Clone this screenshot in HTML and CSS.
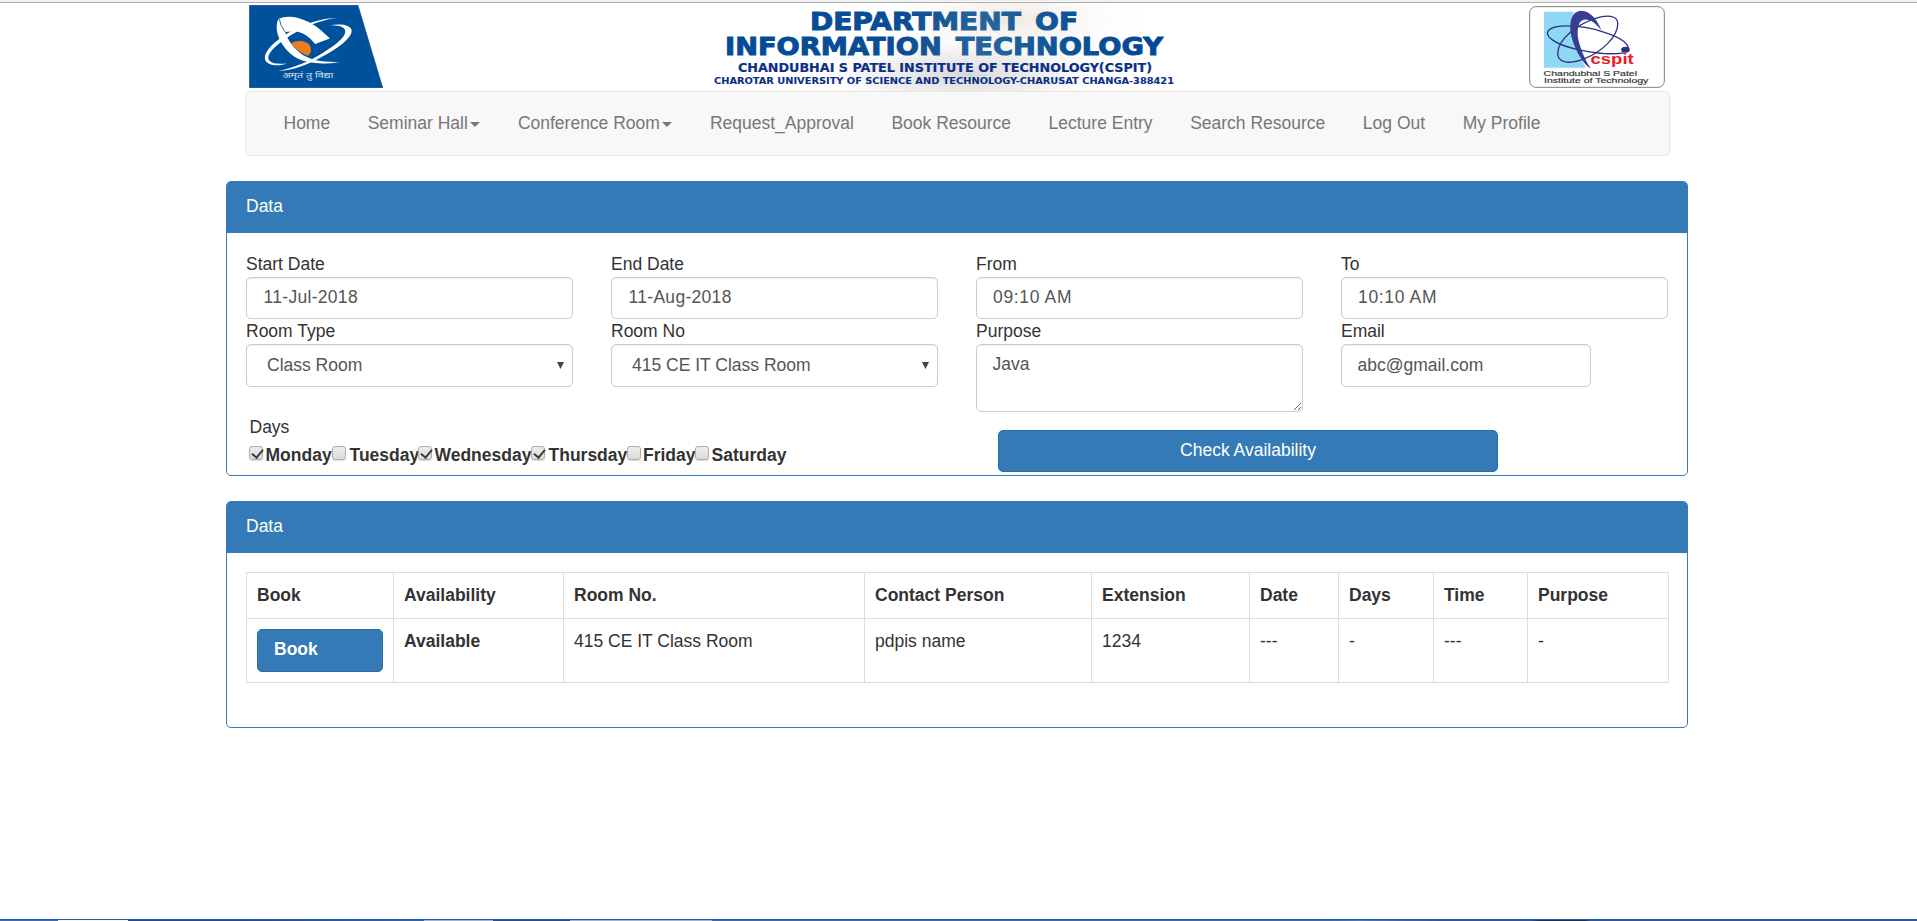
FILE: index.html
```
<!DOCTYPE html>
<html lang="en">
<head>
<meta charset="utf-8">
<title>Book Resource</title>
<link rel="stylesheet" href="styles.css">
</head>
<body>
<div class="topline"></div>
<header class="banner">
  <svg class="logo" viewBox="89 16 401 247" preserveAspectRatio="none">
    <path d="M90 17H415L489 262H90Z" fill="#00519c" stroke="#1b3f93" stroke-width="2"/>
    <path d="M215 130C233 119 262 122 271 137C278 149 274 161 265 167Q234 156 215 130Z" fill="#ec7d1c"/>
    <path d="M178 57C200 46 235 50 266 66C293 79 314 99 331 116L287 132C270 110 250 97 228 94L197 96C208 130 234 156 262 171C290 184 320 186 359 186C310 193 264 191 232 174C195 153 169 110 172 77Q173 64 178 57Z" fill="#fff"/>
    <path d="M180 58Q181 75 197 96" fill="none" stroke="#00519c" stroke-width="2.500"/>
    <path d="M354 54C300 61 245 83 195 119C155 147 138 170 151 183C160 192 181 192 203 190C178 199 149 196 140 184C126 163 158 131 191 109C240 76 300 56 354 54Z" fill="#fff"/>
    <path d="M329 76C366 70 393 76 396 90C400 114 350 150 298 175C255 197 219 210 177 212C220 204 263 186 301 164C347 137 383 110 376 90C371 78 353 76 329 76Z" fill="#fff"/>
    <text class="motto" x="189" y="234" textLength="152" lengthAdjust="spacingAndGlyphs">अमृतं तु विद्या</text>
  </svg>
  <svg class="title" viewBox="0 0 480 88">
    <defs>
      <linearGradient id="ink" gradientUnits="userSpaceOnUse" x1="20" x2="460" y1="0" y2="0">
        <stop offset="0" stop-color="#004b9b"/><stop offset=".42" stop-color="#0b4d93"/><stop offset=".6" stop-color="#24669c"/><stop offset=".8" stop-color="#0c5197"/><stop offset="1" stop-color="#004795"/>
      </linearGradient>
      <radialGradient id="haze"><stop offset="0" stop-color="#d8d8d8"/><stop offset=".5" stop-color="#e8e8e8" stop-opacity=".7"/><stop offset="1" stop-color="#fff" stop-opacity="0"/></radialGradient>
      <radialGradient id="warm"><stop offset="0" stop-color="#eee8e0"/><stop offset="1" stop-color="#fff" stop-opacity="0"/></radialGradient>
    </defs>
    <ellipse cx="310" cy="16" rx="150" ry="50" fill="url(#warm)"/>
    <ellipse cx="265" cy="72" rx="160" ry="42" fill="url(#haze)"/>
    <g class="caps" fill="url(#ink)" stroke="url(#ink)">
      <text x="110" y="26.500" font-size="24" stroke-width="1" word-spacing="4" textLength="268" lengthAdjust="spacingAndGlyphs">DEPARTMENT OF</text>
      <text x="25" y="51.700" font-size="24.500" stroke-width="1" word-spacing="4" textLength="438" lengthAdjust="spacingAndGlyphs">INFORMATION TECHNOLOGY</text>
    </g>
    <g class="caps" fill="#0c2f85" stroke="#0c2f85">
      <text x="38" y="69.200" font-size="11.500" stroke-width=".2" textLength="414" lengthAdjust="spacingAndGlyphs">CHANDUBHAI S PATEL INSTITUTE OF TECHNOLOGY(CSPIT)</text>
      <text x="14" y="81.200" font-size="8.800" stroke-width=".1" textLength="460" lengthAdjust="spacingAndGlyphs">CHAROTAR UNIVERSITY OF SCIENCE AND TECHNOLOGY-CHARUSAT CHANGA-388421</text>
    </g>
  </svg>
  <svg class="cspit" viewBox="387 17 409 247" preserveAspectRatio="none">
    <rect x="389" y="19" width="405" height="243" rx="19" fill="#fff" stroke="#808080" stroke-width="3"/>
    <path d="M432 34H522C507 74 529 145 558 203H432Z" fill="#8fd8f3"/>
    <g fill="none" stroke="#2b3189" stroke-width="4">
      <path d="M672 158C605 169 493 145 457 119C425 95 448 77 501 77C575 77 668 109 682 134Q689 146 681 150"/>
      <path d="M474 154C468 187 505 196 556 175C606 154 655 110 654 69C653 44 620 44 587 54C532 72 477 116 474 154Z"/>
    </g>
    <path d="M511 82C511 47 525 31 546 31C577 34 595 64 605 91C583 62 563 52 547 60C531 69 529 106 541 138C549 164 560 187 573 205C545 192 511 123 511 82Z" fill="#373d91"/>
    <ellipse cx="677" cy="149" rx="13" ry="9" fill="#2b3189"/>
    <text x="572" y="193" class="brand" textLength="130" lengthAdjust="spacingAndGlyphs">cspit</text>
    <text x="431" y="229" class="inst" textLength="281" lengthAdjust="spacingAndGlyphs">Chandubhai S Patel</text>
    <text x="432" y="248" class="inst" textLength="314" lengthAdjust="spacingAndGlyphs">Institute of Technology</text>
  </svg>
</header>
<nav class="navbar">
  <a>Home</a><a>Seminar Hall<i class="caret"></i></a><a>Conference Room<i class="caret"></i></a><a>Request_Approval</a><a>Book Resource</a><a>Lecture Entry</a><a>Search Resource</a><a>Log Out</a><a>My Profile</a>
</nav>
<section class="panel panel-form">
  <div class="heading">Data</div>
  <div class="fields">
    <label>Start Date<input class="control date" value="11-Jul-2018"></label>
    <label>End Date<input class="control date" value="11-Aug-2018"></label>
    <label>From<input class="control time" value="09:10 AM"></label>
    <label>To<input class="control time" value="10:10 AM"></label>
    <label>Room Type<span class="control select">Class Room<svg width="7" height="7" viewBox="0 0 7 7"><path d="M0 0H7L3.500 7Z" fill="#444"/></svg></span></label>
    <label>Room No<span class="control select">415 CE IT Class Room<svg width="7" height="7" viewBox="0 0 7 7"><path d="M0 0H7L3.500 7Z" fill="#444"/></svg></span></label>
    <label>Purpose<textarea class="control area">Java</textarea></label>
    <label>Email<input class="control tall email" value="abc@gmail.com"></label>
  </div>
  <div class="bottom">
    <div class="days">
      <div class="days-title">Days</div>
      <div class="checks">
        <label class="mon"><i class="box on"></i>Monday</label>
        <label class="tue"><i class="box"></i>Tuesday</label>
        <label class="wed"><i class="box on"></i>Wednesday</label>
        <label class="thu"><i class="box on"></i>Thursday</label>
        <label class="fri"><i class="box"></i>Friday</label>
        <label class="sat"><i class="box"></i>Saturday</label>
      </div>
    </div>
    <button class="btn check">Check Availability</button>
  </div>
</section>
<section class="panel panel-table">
  <div class="heading">Data</div>
  <table>
    <colgroup><col class="c1"><col class="c2"><col class="c3"><col class="c4"><col class="c5"><col class="c6"><col class="c7"><col class="c8"><col class="c9"></colgroup>
    <tr class="head"><th>Book</th><th>Availability</th><th>Room No.</th><th>Contact Person</th><th>Extension</th><th>Date</th><th>Days</th><th>Time</th><th>Purpose</th></tr>
    <tr class="row"><td><button class="btn book">Book</button></td><th>Available</th><td>415 CE IT Class Room</td><td>pdpis name</td><td>1234</td><td>---</td><td>-</td><td>---</td><td>-</td></tr>
  </table>
</section>
<div class="taskbar"></div>
</body>
</html>
```
FILE: styles.css
```
* { box-sizing: border-box; }
body {
  margin: 0;
  height: 921px;
  display: flex;
  flex-direction: column;
  overflow: hidden;
  background: #fff;
  color: #333;
  font: 17.5px/25px "Liberation Sans", Arial, sans-serif;
}
.topline { flex: none; height: 3px; background: #f1f1f1; border-bottom: 1px solid #b0b0b0; }
.banner { flex: none; height: 88px; margin-left: 249px; display: flex; }
.logo { width: 134px; height: 83px; margin-top: 2px; }
.title { width: 480px; height: 88px; margin-left: 317px; }
.cspit { width: 136px; height: 82px; margin: 3px 0 0 349px; }
.motto { font: 22px "Noto Sans", sans-serif; fill: #d8e4f2; }
.caps { font-family: "DejaVu Sans", sans-serif; font-weight: bold; }
.brand { font: bold 44px "Liberation Sans", sans-serif; fill: #ee1c25; }
.inst { font: 22px "Liberation Sans", sans-serif; fill: #333; stroke: #333; stroke-width: .5; }
.navbar {
  flex: none;
  width: 1425px;
  height: 65px;
  margin-left: 245px;
  padding: 19px 0 0 37.500px;
  display: flex;
  gap: 37.5px;
  background: #f8f8f8;
  border: 1px solid #e7e7e7;
  border-radius: 5px;
  color: #777;
}
.caret { display: inline-block; margin-left: 2.500px; vertical-align: middle; border: 5px solid transparent; border-top-color: #777; border-bottom: 0; }
.panel { flex: none; width: 1462px; margin-left: 226px; border: 1px solid #337ab7; border-radius: 5px; }
.panel-form { margin-top: 25px; height: 295px; }
.panel-table { margin-top: 25px; height: 227px; }
.heading { height: 51px; padding: 12px 19px; background: #337ab7; color: #fff; border-radius: 3px 3px 0 0; }
.fields {
  padding: 19px 19px 0;
  display: grid;
  grid-template-columns: repeat(4, 327px);
  grid-template-rows: 67px 93px;
  column-gap: 38px;
}
.control {
  display: block;
  width: 100%;
  height: 42px;
  margin: 0;
  padding: 6px 15.500px 7px;
  border: 1px solid #ccc;
  border-radius: 5px;
  background: #fff;
  box-shadow: inset 0 1px 1px rgba(0,0,0,.075);
  color: #555;
  font: inherit;
}
.date { padding-left: 16.500px; letter-spacing: .3px; }
.time { padding-left: 16px; letter-spacing: .65px; }
.select, .tall { height: 43px; }
.select { display: flex; align-items: center; justify-content: space-between; padding: 6px 8px 7px 20px; }
.area { height: 68px; padding-top: 7px; }
.email { width: 250px; }
.bottom { display: flex; }
.days { width: 771px; padding: 3px 0 0 22px; }
.days-title { padding-left: .5px; }
.checks { display: flex; margin-top: 3px; font-weight: bold; }
.checks label { display: flex; gap: 2.500px; white-space: nowrap; }
.mon { width: 83px; } .tue { width: 86px; } .wed { width: 113px; } .thu { width: 95.500px; } .fri { width: 68.500px; }
.checks .tue, .checks .thu { column-gap: 3.500px; }
.box { flex: none; width: 14px; height: 14px; margin-top: 3px; border: 1px solid #adadad; border-radius: 3px; background: linear-gradient(#ececec, #dcdcdc); box-shadow: 0 1px 1px #ddd; }
.on::after { content: ""; display: block; width: 5px; height: 9px; margin: 0 0 0 4px; border: solid #3c3c3c; border-width: 0 2.500px 2.500px 0; transform: rotate(40deg); }
.btn { display: block; border: 1px solid #2e6da4; border-radius: 5px; background: #337ab7; color: #fff; font: inherit; padding: 0 0 2px; }
.check { width: 500px; height: 42px; margin-top: 18px; }
.book { width: 126px; height: 43px; padding-left: 16px; text-align: left; font-weight: bold; }
table { width: 1422px; margin: 19px 0 0 19px; border-collapse: collapse; table-layout: fixed; }
th, td { padding: 10px; border: 1px solid #ddd; text-align: left; vertical-align: top; }
.head { height: 46px; } .row { height: 64px; }
.c1 { width: 147px; } .c2 { width: 170px; } .c3 { width: 301px; } .c4 { width: 227px; } .c5 { width: 158px; } .c6 { width: 89px; } .c7 { width: 95px; } .c8 { width: 94px; } .c9 { width: 141px; }
.taskbar {
  flex: none;
  height: 2px;
  margin-top: auto;
  border-top: 1px solid #345a9c;
  background: linear-gradient(90deg, #4069b1 58px, #f4f6fa 58px 128px, #2b4a8c 128px 250px, #3261ad 400px 424px, #a3b3d5 424px 493px, #2c4c8b 493px 570px, #a3b3d5 570px 712px, #3f69ae 712px 1330px, #5077ba 1360px, #35559b 1440px 1530px, #1e2e54 1540px 1585px, #35559b 1590px);
}
```
